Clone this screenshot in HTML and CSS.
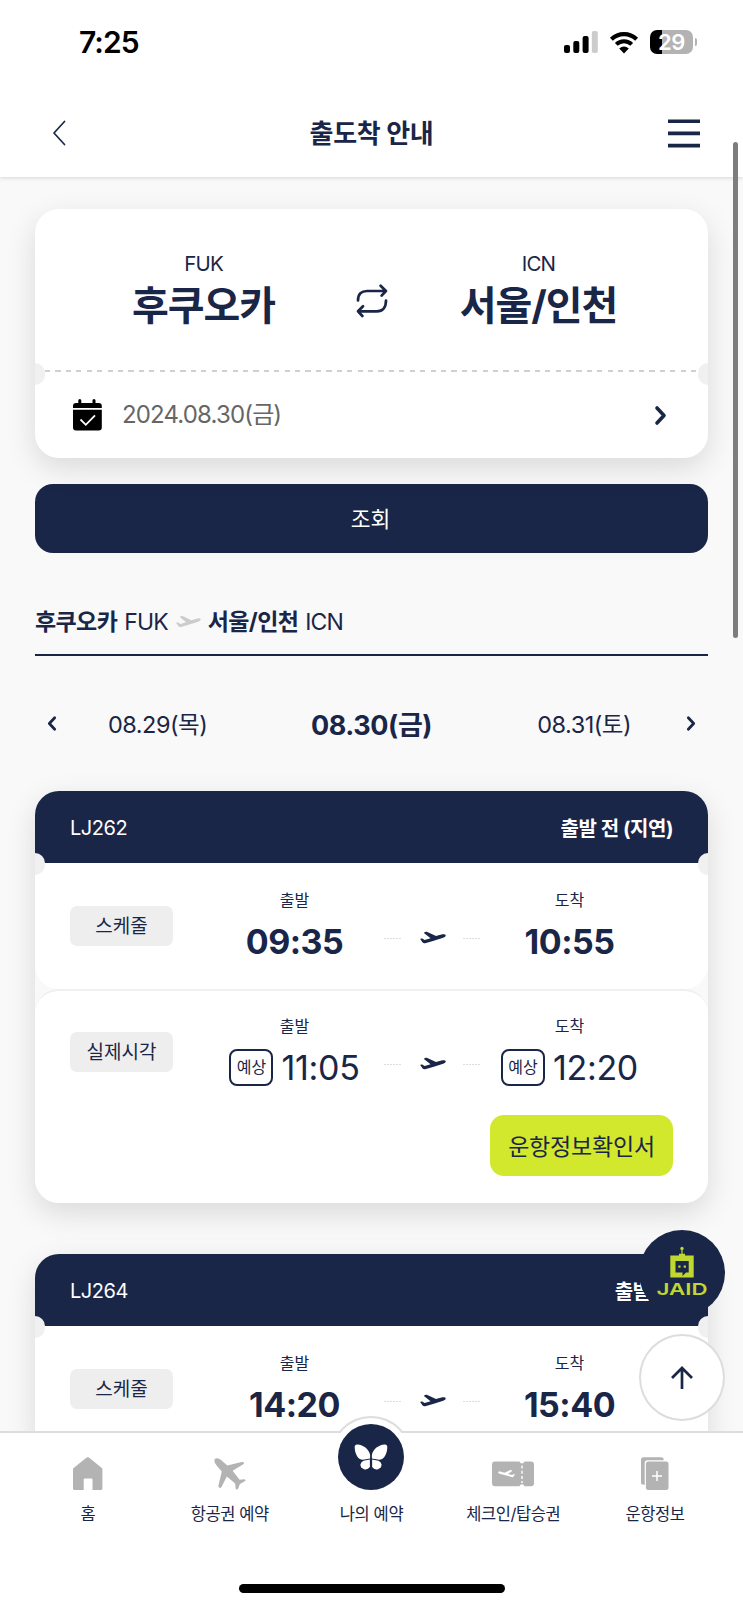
FILE: index.html
```html
<!DOCTYPE html>
<html lang="ko">
<head>
<meta charset="utf-8">
<title>출도착 안내</title>
<link rel="stylesheet" href="styles.css">
</head>
<body>
<svg class="defs" width="0" height="0">
  <symbol id="plane" viewBox="0 0 26 13"><path d="M.2 8 Q1 7 2.2 7.6 L4.6 9 L10.6 7.3 L3.9 1.9 Q5 .5 6.8 .8 L16 5.1 L22.4 3.3 Q25.4 2.7 25.8 4.2 Q25.8 5.8 23.2 6.7 L13 9.9 L5.2 12.2 Q3.6 12.6 2.6 11.5 Z"/></symbol>
  <symbol id="next" viewBox="0 0 13 20"><path d="M3 2.5 L10 10 L3 17.5" fill="none" stroke="currentColor" stroke-width="3.6" stroke-linecap="round" stroke-linejoin="round"/></symbol>
</svg>
<div class="screen">
  <div class="status">
    <span class="clock">7:25</span>
    <div class="status-icons">
      <svg width="34" height="23" viewBox="0 0 34 23"><rect x="0" y="14" width="6" height="8" rx="2"/><rect x="9.3" y="10" width="6" height="12" rx="2"/><rect x="18.6" y="5" width="6" height="17" rx="2"/><rect x="27.8" y="0" width="6" height="22" rx="2" fill="#ccc"/></svg>
      <svg width="30" height="23" viewBox="0 0 30 23"><path d="M2.4 8.2 A18 18 0 0 1 27.6 8.2" fill="none" stroke="#000" stroke-width="4.2"/><path d="M7.3 13.4 A11 11 0 0 1 22.7 13.4" fill="none" stroke="#000" stroke-width="4"/><path d="M10.2 17.4 Q15 13.6 19.8 17.4 L15 22.4Z"/></svg>
      <div class="battery"><span>29</span></div>
    </div>
  </div>
  <header class="header">
    <svg class="back" width="14" height="26" viewBox="0 0 14 26"><path d="M12.5 1.5 L2 13 L12.5 24.5" fill="none" stroke="#1a2647" stroke-width="1.7" stroke-linecap="round" stroke-linejoin="round"/></svg>
    <h1 class="title">출도착 안내</h1>
    <svg width="32" height="29" viewBox="0 0 32 29"><path d="M0 2.2H32M0 14.4H32M0 26.6H32" stroke="#1a2647" stroke-width="3.6"/></svg>
  </header>

  <main class="content">
    <section class="search-card">
      <div class="route-pick">
        <div class="airport"><span class="code">FUK</span><strong class="city">후쿠오카</strong></div>
        <svg width="34" height="36" viewBox="0 0 34 36"><g fill="none" stroke="#1a2647" stroke-width="2.7" stroke-linecap="round" stroke-linejoin="round"><path d="M3 17.5 C3 10.5 6.5 8 12 8 H31 M25.6 2.8 L31 8 L26.6 12.6"/><path d="M31 17.5 C31 24.5 27.5 28.3 22 28.3 H3 M8 23.3 L3 28.3 L7.4 33"/></g></svg>
        <div class="airport to"><span class="code">ICN</span><strong class="city">서울/인천</strong></div>
      </div>
      <div class="dash"></div>
      <div class="date-pick">
        <svg width="30" height="32" viewBox="0 0 30 32"><path d="M0 9 V7 Q0 4 3 4 H5.3 V1.5 Q5.3 0 6.8 0 Q8.3 0 8.3 1.5 V4 H19.5 V1.5 Q19.5 0 21 0 Q22.5 0 22.5 1.5 V4 H25.8 Q28.8 4 28.8 7 V9 Z M0 10.7 H28.8 V28.5 Q28.8 31.5 25.8 31.5 H3 Q0 31.5 0 28.5 Z"/><path d="M7.5 20.5 L12.8 25.8 L22 16.3" fill="none" stroke="#fff" stroke-width="1.8"/></svg>
        <span class="date">2024.08.30(금)</span>
        <svg width="13" height="21"><use href="#next"/></svg>
      </div>
    </section>

    <button class="lookup">조회</button>

    <h2 class="route"><b>후쿠오카</b><span>FUK</span><svg width="25" height="13"><use href="#plane"/></svg><b>서울/인천</b><span>ICN</span></h2>

    <div class="days">
      <svg class="flip" width="10" height="17"><use href="#next"/></svg>
      <span class="day">08.29(목)</span>
      <strong class="today">08.30(금)</strong>
      <span class="day last">08.31(토)</span>
      <svg width="10" height="17"><use href="#next"/></svg>
    </div>

    <article class="flight">
      <div class="flight-head"><span>LJ262</span><strong>출발 전 (지연)</strong></div>
      <div class="leg">
        <span class="chip">스케줄</span>
        <div class="point"><span class="label">출발</span><strong class="time">09:35</strong></div>
        <div class="path"><i></i><svg width="26" height="13"><use href="#plane"/></svg><i></i></div>
        <div class="point"><span class="label">도착</span><strong class="time">10:55</strong></div>
      </div>
      <div class="leg actual">
        <span class="chip">실제시각</span>
        <div class="point"><span class="label">출발</span><div class="est"><em>예상</em><span class="time">11:05</span></div></div>
        <div class="path"><i></i><svg width="26" height="13"><use href="#plane"/></svg><i></i></div>
        <div class="point"><span class="label">도착</span><div class="est"><em>예상</em><span class="time">12:20</span></div></div>
        <button class="confirm">운항정보확인서</button>
      </div>
    </article>

    <article class="flight">
      <div class="flight-head"><span>LJ264</span><strong>출발 전</strong></div>
      <div class="leg">
        <span class="chip">스케줄</span>
        <div class="point"><span class="label">출발</span><strong class="time">14:20</strong></div>
        <div class="path"><i></i><svg width="26" height="13"><use href="#plane"/></svg><i></i></div>
        <div class="point"><span class="label">도착</span><strong class="time">15:40</strong></div>
      </div>
    </article>
  </main>

  <div class="scrollbar"></div>
  <div class="chatbot">
    <svg width="86" height="86" viewBox="0 0 86 86">
      <g fill="#bfd730"><circle cx="43" cy="18.5" r="1.7"/><path d="M42.4 19H43.6V26H42.4Z M40 23.8H46V26H40Z"/><path fill-rule="evenodd" d="M31.3 25.5H54.7V47.5H31.3Z M36.5 31V42.5H43.5V46L47 42.5H49.7V31Z"/><rect x="39.3" y="35.5" width="2.2" height="2.2"/><rect x="44.7" y="35.5" width="2.2" height="2.2"/></g>
      <text x="17.5" y="65" class="jaid" textLength="51" lengthAdjust="spacingAndGlyphs">JAID</text>
    </svg>
  </div>
  <div class="to-top"><svg width="24" height="24" viewBox="0 0 24 24"><path d="M12 23V2M2 12L12 2L22 12" fill="none" stroke="#1a2647" stroke-width="2.7"/></svg></div>

  <nav class="tabs">
    <a class="tab"><span class="ico"><svg width="30" height="33" viewBox="0 0 30 33"><path fill="#b3b3b3" d="M13.7 .6 Q14.8 -.2 15.9 .6 L28.5 10.7 Q29.4 11.4 29.4 12.5 V31.5 Q29.4 33 27.9 33 H19.5 V22.5 Q19.5 21.4 18.4 21.4 H11.8 Q10.7 21.4 10.7 22.5 V33 H1.5 Q0 33 0 31.5 V12.5 Q0 11.4 .9 10.7Z"/></svg></span>홈</a>
    <a class="tab"><span class="ico"><svg width="32" height="32" viewBox="0 0 32 32"><path fill="#b3b3b3" d="M.9 1 C2.5 -.4 5.8 .6 8.2 3 L13.3 7.6 L27.7 4 Q29.4 3.6 30 4.8 Q30.2 6 28.5 6.8 L18.6 12.7 L25.6 21.7 L30.5 21.2 Q32 21.7 31.2 23 L25.9 26 L24 31 Q22.6 32 21.6 30.8 L21.2 25.5 L12.8 18.4 L7.5 28.9 Q6.2 30.5 5 29.6 Q4.2 28.6 4.5 27.3 L7.8 13.4 L3 8 C.8 5.5 -.3 2.5 .9 1Z"/></svg></span>항공권 예약</a>
    <a class="tab"><span class="ico"></span>나의 예약</a>
    <a class="tab"><span class="ico"><svg width="42" height="26" viewBox="0 0 42 26"><path fill="#b3b3b3" d="M3 .5 H27.5 A2.6 2.6 0 0 0 32.5 .5 H39 Q42 .5 42 3.5 V22.2 Q42 25.2 39 25.2 H32.5 A2.6 2.6 0 0 0 27.5 25.2 H3 Q0 25.2 0 22.2 V3.5 Q0 .5 3 .5Z"/><path d="M30 4.5V22" stroke="#fff" stroke-width="1.4" stroke-dasharray="3 2.2"/><g transform="matrix(-.66 0 0 .62 23 8.5)" fill="#fff"><path d="M.2 8 Q1 7 2.2 7.6 L4.6 9 L10.6 7.3 L3.9 1.9 Q5 .5 6.8 .8 L16 5.1 L22.4 3.3 Q25.4 2.7 25.8 4.2 Q25.8 5.8 23.2 6.7 L5.2 12.2 Q3.6 12.6 2.6 11.5 Z"/></g></svg></span>체크인/탑승권</a>
    <a class="tab"><span class="ico"><svg width="28" height="33" viewBox="0 0 28 33"><path fill="#b3b3b3" d="M2.5 .3 H20.2 Q22.7 .3 22.7 2.8 V3.3 H6.5 Q3.7 3.3 3.7 6 V27.8 H2.5 Q0 27.8 0 25.3 V2.8 Q0 .3 2.5 .3Z"/><rect x="4.9" y="4.6" width="22.6" height="28.4" rx="2.5" fill="#b3b3b3"/><path d="M11 19H21M16 14V24" stroke="#fff" stroke-width="1.5"/></svg></span>운항정보</a>
    <div class="bump"><div class="my"><svg width="36" height="28" viewBox="0 0 36 28"><g fill="#fff"><path d="M1.7 4.2 Q1.6 1.4 4.5 1.6 C10.5 2 15.6 6 17.1 11.8 V15.4 L10 16.8 C4.6 16.8 1.8 10 1.7 4.2Z"/><path d="M10.5 17.8 L16.9 16.5 V24 Q14.6 27.2 11 26.2 Q7.2 25 7.5 21.6 Q7.9 18.7 10.5 17.8Z"/><path d="M34.3 4.2 Q34.4 1.4 31.5 1.6 C25.5 2 20.4 6 18.9 11.8 V15.4 L26 16.8 C31.4 16.8 34.2 10 34.3 4.2Z"/><path d="M25.5 17.8 L19.1 16.5 V24 Q21.4 27.2 25 26.2 Q28.8 25 28.5 21.6 Q28.1 18.7 25.5 17.8Z"/></g></svg></div></div>
    <div class="home-bar"></div>
  </nav>
</div>
</body>
</html>
```
FILE: styles.css
```css
* { box-sizing: border-box; }
body { margin: 0; font-family: Inter, "Noto Sans CJK KR", sans-serif; color: #1a2647; }
.defs { position: absolute; }
svg { display: block; flex: none; }
button { border: 0; padding: 0; font-family: inherit; color: inherit; display: block; }

.screen { position: relative; width: 743px; height: 1607px; overflow: hidden; background: #f9f9f9; }

.status { position: relative; z-index: 1; height: 86px; padding: 0 46px 2px 79px; display: flex; align-items: center; justify-content: space-between; background: #fff; color: #000; }
.clock { font-size: 30px; font-weight: 600; letter-spacing: -.9px; }
.status-icons { display: flex; align-items: center; gap: 11px; }
.battery { position: relative; width: 43px; height: 24px; margin: 0 4px 0 0; border-radius: 7px; background: linear-gradient(90deg, #000 12.5px, #b3b3b3 12.5px); color: #fff; font-size: 22px; font-weight: 600; line-height: 24px; text-align: center; letter-spacing: -.5px; }
.battery::after { content: ""; position: absolute; right: -4px; top: 8px; width: 2.5px; height: 8px; border-radius: 0 3px 3px 0; background: #b3b3b3; }

.header { position: relative; height: 91px; padding: 3px 43px 0 52px; display: flex; align-items: center; justify-content: space-between; background: #fff; box-shadow: 0 1px 4px rgba(0,0,0,.14); }
.title { margin: 2px -9px 0 0; font-size: 26px; font-weight: 700; line-height: 34px; letter-spacing: -.3px; }

.content { padding: 32px 35px 0; }
.search-card { position: relative; height: 249px; border-radius: 24px; background: #fff; box-shadow: 0 10px 30px rgba(0,0,0,.13); }
.search-card::before, .search-card::after, .flight-head::before, .flight-head::after { content: ""; position: absolute; width: 10px; height: 22px; background: #f0f0f0; }
.search-card::before, .flight-head::before { left: 0; border-radius: 0 11px 11px 0; }
.search-card::after, .flight-head::after { right: 0; border-radius: 11px 0 0 11px; }
.search-card::before, .search-card::after { top: 154px; }
.route-pick { height: 161px; padding: 42px 40px 0; display: grid; grid-template-columns: 257px 79px 257px; justify-items: center; }
.route-pick > svg { margin-top: 32px; }
.airport { display: flex; flex-direction: column; align-items: center; }
.airport.to { margin-right: 2px; }
.code { font-size: 20.5px; line-height: 26px; letter-spacing: -.8px; }
.city { font-size: 40px; font-weight: 700; line-height: 58px; letter-spacing: -1px; white-space: nowrap; }
.dash { height: 2px; margin: 0 10px; background: repeating-linear-gradient(90deg, #d0d0d0 0 5.2px, transparent 5.2px 10.42px); }
.date-pick { height: 86px; padding: 0 41px 0 38px; display: flex; align-items: center; }
.date { margin: 0 auto 0 19px; font-size: 24px; line-height: 30px; letter-spacing: -.85px; color: #666; }

.lookup { width: 100%; height: 69px; margin-top: 26px; padding: 0 2px 2px 0; border-radius: 18px; background: #1a2647; color: #fff; font-size: 21.5px; }
.route { height: 103px; margin: 0; padding-top: 36px; border-bottom: 2px solid #1a2647; display: flex; align-items: center; font-size: 23px; font-weight: 400; line-height: 30px; white-space: nowrap; }
.route b { letter-spacing: -.6px; }
.route span { margin-left: 7px; letter-spacing: -.9px; }
.route svg { margin: 0 7px 0 8px; fill: #ccc; }
.days { height: 135px; padding: 0 12px 0 12px; display: grid; grid-template-columns: 10px 190px 1fr 190px 10px; align-items: center; }
.flip { transform: scaleX(-1); }
.day { margin-top: -2px; padding-left: 51px; font-size: 23.5px; letter-spacing: -.5px; }
.day.last { padding: 0 55px 0 0; text-align: right; }
.today { font-size: 27px; font-weight: 700; letter-spacing: -.4px; text-align: center; }

.flight { margin-bottom: 51px; border-radius: 24px; box-shadow: 0 10px 30px rgba(0,0,0,.13); }
.flight-head { position: relative; height: 72px; padding: 0 35px; border-radius: 24px 24px 0 0; background: #1a2647; color: #fff; display: flex; align-items: center; justify-content: space-between; font-size: 20px; letter-spacing: -.45px; }
.flight-head span { padding-top: 2px; }
.flight-head::before, .flight-head::after { top: 62px; z-index: 1; }
.leg { height: 126px; padding: 24px 35px 0; border-radius: 0 0 24px 24px; background: #fff; display: grid; grid-template-columns: 140px 169px 106px 169px; align-content: start; }
.leg.actual { height: 214px; padding-top: 22px; border-radius: 24px; border-top: 2px solid #f0f0f0; }
.chip { width: 103px; height: 40px; margin-top: 19px; padding-top: 1px; border-radius: 7px; background: #eee; font-size: 19px; line-height: 40px; text-align: center; }
.point { display: flex; flex-direction: column; align-items: center; }
.label { font-size: 16px; line-height: 26px; }
.time { margin-top: 9px; font-size: 34px; line-height: 40px; }
strong.time { letter-spacing: -.5px; }
.est { display: flex; align-items: center; }
.est .time { margin-left: 8px; letter-spacing: -.3px; }
.est em { width: 44px; height: 37px; margin-top: 7px; border: 2px solid #1a2647; border-radius: 8px; font-size: 16px; font-style: normal; line-height: 32px; text-align: center; }
.path { height: 13px; margin: 44px 4px 0 0; padding: 0 0 0 5px; display: flex; align-items: center; justify-content: space-between; fill: #1a2647; }
.path i { width: 18px; height: 1px; margin-top: 2px; background: repeating-linear-gradient(90deg, #ddd 0 2px, transparent 2px 3px); }
.confirm { grid-column: 1 / -1; justify-self: end; width: 183px; height: 61px; margin: 27px -19px 0 0; padding-bottom: 2px; border-radius: 14px; background: #d2e82c; font-size: 23px; letter-spacing: -.2px; }

.scrollbar { position: absolute; left: 733px; top: 142px; width: 5px; height: 496px; border-radius: 3px; background: #7d7d7d; }
.chatbot { position: absolute; left: 639px; top: 1229.5px; width: 86px; height: 86px; border-radius: 50%; background: #1a2647; }
.jaid { font-size: 16.5px; font-weight: 600; fill: #bfd730; }
.to-top { position: absolute; left: 639px; top: 1334px; width: 86px; height: 87px; border: 2px solid #ddd; border-radius: 50%; background: #fff; display: flex; align-items: center; justify-content: center; }

.tabs { position: absolute; left: 0; right: 0; bottom: 0; height: 176px; padding: 0 17px; border-top: 2px solid #ddd; background: #fff; display: flex; }
.tab { flex: 1; display: flex; flex-direction: column; align-items: center; font-size: 16.5px; line-height: 26px; letter-spacing: -.4px; }
.ico { height: 33px; margin: 24px 0 11px; display: flex; align-items: center; }
.bump { position: absolute; left: 330px; top: -17px; width: 82px; height: 82px; border: 2px solid transparent; border-radius: 50%; display: flex; align-items: center; justify-content: center; background: linear-gradient(#fff, #fff) padding-box, linear-gradient(#ddd 17px, #fff 17px) border-box; }
.my { width: 66px; height: 66px; border-radius: 50%; background: #1a2647; display: flex; align-items: center; justify-content: center; }
.home-bar { position: absolute; left: 239px; top: 151px; width: 266px; height: 9px; border-radius: 5px; background: #000; }
```
